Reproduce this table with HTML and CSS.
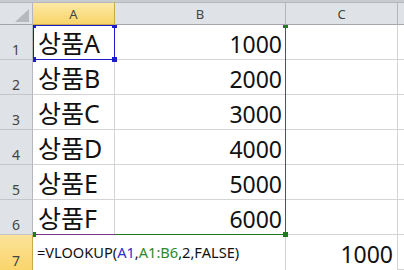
FILE: index.html
```html
<!DOCTYPE html>
<html>
<head>
<meta charset="utf-8">
<link rel="stylesheet" href="styles.css">
</head>
<body>
<div class="sheet">
  <div class="strip"></div>
  <div class="hdr corner"><span class="tri"></span></div>
  <div class="hdr col sel">A</div>
  <div class="hdr col">B</div>
  <div class="hdr col">C</div>
  <div class="hdr col end"></div>

  <div class="hdr rn">1</div><div class="c t">상품A</div><div class="c n">1000</div><div class="c"></div><div class="c end"></div>
  <div class="hdr rn">2</div><div class="c t">상품B</div><div class="c n">2000</div><div class="c"></div><div class="c end"></div>
  <div class="hdr rn">3</div><div class="c t">상품C</div><div class="c n">3000</div><div class="c"></div><div class="c end"></div>
  <div class="hdr rn">4</div><div class="c t">상품D</div><div class="c n">4000</div><div class="c"></div><div class="c end"></div>
  <div class="hdr rn">5</div><div class="c t">상품E</div><div class="c n">5000</div><div class="c"></div><div class="c end"></div>
  <div class="hdr rn">6</div><div class="c t">상품F</div><div class="c n">6000</div><div class="c"></div><div class="c end"></div>
  <div class="hdr rn sel">7</div><div class="c f span2">=VLOOKUP(<span class="rb">A1</span>,<span class="rg">A1:B6</span>,2,FALSE)</div><div class="c n r7">1000</div><div class="c end"></div>

  <div class="overlay">
    <div class="green"></div>
    <div class="purple"></div>
    <div class="blue"></div>
    <span class="h hb" style="left:-2px;top:-2px"></span>
    <span class="h hb" style="left:79px;top:-2px"></span>
    <span class="h hb" style="left:-2px;top:32px"></span>
    <span class="h hb" style="left:79px;top:32px"></span>
    <span class="h hg" style="left:250px;top:-2px"></span>
    <span class="h hg" style="left:250px;top:207px"></span>
    <span class="h hg" style="left:-2px;top:207px"></span>
  </div>
</div>
</body>
</html>
```
FILE: styles.css
```css
html, body {
  margin: 0;
  padding: 0;
  background: #ffffff;
}
.sheet {
  position: relative;
  display: grid;
  grid-template-columns: 33px 82px 171px 112px 6px;
  grid-template-rows: 3px 22px repeat(7, 35px);
  width: 404px;
  height: 270px;
  overflow: hidden;
  font-family: "Noto Sans", "Noto Sans CJK KR", sans-serif;
}
.strip {
  grid-column: 1 / -1;
  background: #c9cbcf;
  border-bottom: 1px solid #b4b7bb;
  box-sizing: border-box;
}
.hdr {
  box-sizing: border-box;
  background: #dfe2e6;
  color: #444;
  border-right: 1px solid #b4b8bd;
  border-bottom: 1px solid #a3a7ac;
  display: flex;
  justify-content: center;
  align-items: center;
  font-size: 13px;
  line-height: 1;
}
.hdr.corner {
  justify-content: flex-end;
  align-items: flex-end;
  padding: 0 3px 2px 0;
}
.tri {
  width: 14px;
  height: 13px;
  background: #b6b9bd;
  clip-path: polygon(100% 0, 100% 100%, 0 100%);
}
.hdr.col { padding-top: 1px; }
.hdr.end { border-right: none; }
.hdr.rn {
  align-items: flex-end;
  padding-bottom: 2px;
  font-size: 14px;
  border-bottom-color: #c3c6ca;
}
.hdr.sel {
  background: linear-gradient(#fde9a6, #f8d46a);
  border-bottom-color: #c9a84a;
  border-right-color: #c9a84a;
}
.hdr.rn.sel { border-bottom: none; background: linear-gradient(#fce39a, #f9d56c); }
.c {
  box-sizing: border-box;
  border-right: 1px solid #d4d4d4;
  border-bottom: 1px solid #d4d4d4;
  display: flex;
  align-items: flex-end;
  font-size: 23px;
  line-height: 1;
  color: #111;
  padding-bottom: 3px;
  white-space: nowrap;
}
.c.end { border-right: none; }
.c.t { padding-left: 5px; font-size: 25px; padding-bottom: 3px; }
.c.n { justify-content: flex-end; padding-right: 3px; }
.c.r7 { padding-bottom: 4px; padding-right: 4px; border-bottom: none; }
.c.f {
  grid-column: span 2;
  font-size: 14.6px;
  padding-left: 4px;
  padding-bottom: 10px;
  border-bottom: none;
}
.rb { color: #2f2fc4; }
.rg { color: #2b8a2b; }
.overlay {
  position: absolute;
  left: 33px;
  top: 25px;
  right: 0;
  bottom: 0;
  overflow: hidden;
  pointer-events: none;
}
.blue {
  position: absolute;
  left: 0;
  top: 0;
  width: 82px;
  height: 35px;
  box-sizing: border-box;
  border: 1px solid #1c1cc8;
}
.green {
  position: absolute;
  left: 0;
  top: 0;
  width: 253px;
  height: 210px;
  box-sizing: border-box;
  border-right: 1px solid #1f7a1f;
  border-bottom: 1px solid #1f7a1f;
}
.purple {
  position: absolute;
  left: 0;
  top: 209px;
  width: 82px;
  height: 1px;
  background: #7a3a8c;
}
.h {
  position: absolute;
  width: 5px;
  height: 5px;
}
.hb { background: #1c1cc8; }
.hg { background: #1f7a1f; }
```
